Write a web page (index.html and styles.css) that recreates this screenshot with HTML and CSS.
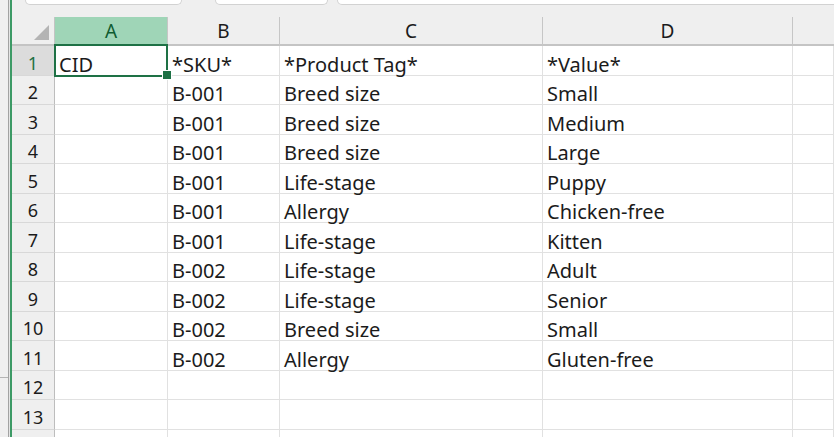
FILE: index.html
```html
<!DOCTYPE html>
<html>
<head>
<meta charset="utf-8">
<link rel="stylesheet" href="styles.css">
</head>
<body>
<div class="app">
  <div class="gutter"><div class="gutter-top"></div></div>
  <div class="edge"></div>
  <div class="green"></div>
  <div class="main">
    <div class="formula">
      <div class="fbox b1"></div>
      <div class="fbox b2"></div>
      <div class="fbox b3"></div>
    </div>
    <div class="sheet">
      <div class="corner"><svg width="15" height="15" viewBox="0 0 15 15"><path d="M15 0 L15 15 L0 15 Z" fill="#b4b4b4"/></svg></div>
      <div class="ch ch-sel">A</div><div class="ch">B</div><div class="ch">C</div><div class="ch">D</div><div class="ch last"></div>

      <div class="rh rh-sel">1</div><div class="c sel">CID</div><div class="c">*SKU*</div><div class="c">*Product Tag*</div><div class="c">*Value*</div><div class="c"></div>
      <div class="rh">2</div><div class="c"></div><div class="c">B-001</div><div class="c">Breed size</div><div class="c">Small</div><div class="c"></div>
      <div class="rh">3</div><div class="c"></div><div class="c">B-001</div><div class="c">Breed size</div><div class="c">Medium</div><div class="c"></div>
      <div class="rh">4</div><div class="c"></div><div class="c">B-001</div><div class="c">Breed size</div><div class="c">Large</div><div class="c"></div>
      <div class="rh">5</div><div class="c"></div><div class="c">B-001</div><div class="c">Life-stage</div><div class="c">Puppy</div><div class="c"></div>
      <div class="rh">6</div><div class="c"></div><div class="c">B-001</div><div class="c">Allergy</div><div class="c">Chicken-free</div><div class="c"></div>
      <div class="rh">7</div><div class="c"></div><div class="c">B-001</div><div class="c">Life-stage</div><div class="c">Kitten</div><div class="c"></div>
      <div class="rh">8</div><div class="c"></div><div class="c">B-002</div><div class="c">Life-stage</div><div class="c">Adult</div><div class="c"></div>
      <div class="rh">9</div><div class="c"></div><div class="c">B-002</div><div class="c">Life-stage</div><div class="c">Senior</div><div class="c"></div>
      <div class="rh">10</div><div class="c"></div><div class="c">B-002</div><div class="c">Breed size</div><div class="c">Small</div><div class="c"></div>
      <div class="rh">11</div><div class="c"></div><div class="c">B-002</div><div class="c">Allergy</div><div class="c">Gluten-free</div><div class="c"></div>
      <div class="rh">12</div><div class="c"></div><div class="c"></div><div class="c"></div><div class="c"></div><div class="c"></div>
      <div class="rh">13</div><div class="c"></div><div class="c"></div><div class="c"></div><div class="c"></div><div class="c"></div>
      <div class="rh"></div><div class="c"></div><div class="c"></div><div class="c"></div><div class="c"></div><div class="c"></div>
    </div>
  </div>
</div>
</body>
</html>
```
FILE: styles.css
```css
* { box-sizing: border-box; }
html, body { margin: 0; padding: 0; }
body {
  background: #efefef;
  font-family: "Noto Sans", "Open Sans", sans-serif;
  color: #1b1b1b;
}
.app {
  display: flex;
  width: 834px;
  height: 437px;
  overflow: hidden;
}
.gutter {
  width: 9px;
  flex: none;
  background: #efefef;
  border-right: 1px solid #a2a2a2;
}
.gutter-top {
  height: 378px;
  border-bottom: 1px solid #b4b4b4;
}
.edge { width: 1px; flex: none; background: #e4e4e4; }
.green { width: 2px; flex: none; background: #3d9a66; }
.main {
  flex: 1;
  min-width: 0;
  display: flex;
  flex-direction: column;
  background: #efefef;
}
.formula {
  height: 17px;
  flex: none;
  display: flex;
  align-items: flex-start;
  padding-left: 13px;
  margin-right: -12px;
}
.fbox {
  height: 5px;
  background: #fff;
  border: 1px solid #d2d2d2;
  border-top: none;
  border-radius: 0 0 7px 7px;
}
.b1 { width: 157px; }
.b2 { width: 113px; margin-left: 33px; }
.b3 { flex: 1; margin-left: 9px; }
.sheet {
  display: grid;
  grid-template-columns: 43px 113px 112px 263px 250px 1fr;
  grid-template-rows: 29px repeat(14, 29.5px);
  background: #fff;
}
.corner {
  background: #efefef;
  border-right: 1px solid #c4c4c4;
  border-bottom: 2px solid #c4c4c4;
  display: flex;
  align-items: flex-end;
  justify-content: flex-end;
  padding: 0 5px 4px 0;
}
.corner svg { display: block; }
.ch {
  background: #efefef;
  border-right: 1px solid #c6c6c6;
  border-bottom: 2px solid #c4c4c4;
  display: flex;
  align-items: flex-end;
  justify-content: center;
  font-size: 19px;
  line-height: 20px;
  padding-bottom: 3px;
  color: #1b1b1b;
}
.ch.last { border-right: none; }
.ch-sel {
  background: #9fd5b7;
  color: #0f5c31;
  border-bottom-color: #1e7145;
}
.rh {
  background: #efefef;
  border-right: 1px solid #bdbdbd;
  border-bottom: 1px solid #d8d8d8;
  display: flex;
  align-items: flex-end;
  justify-content: center;
  font-size: 18px;
  line-height: 20px;
  padding-bottom: 2px;
  color: #1b1b1b;
}
.rh-sel {
  background: #dcdcdc;
  color: #1e7145;
}
.c {
  border-right: 1px solid #e1e1e1;
  border-bottom: 1px solid #e1e1e1;
  display: flex;
  align-items: flex-end;
  padding: 0 4px 0 4px;
  font-size: 20px;
  line-height: 20px;
  white-space: nowrap;
  overflow: visible;
}
.sel {
  position: relative;
  z-index: 2;
}
.sel::after {
  content: "";
  position: absolute;
  left: -1px;
  top: -2px;
  right: -1px;
  bottom: -2px;
  border: 2px solid #1e7145;
}
.sel::before {
  content: "";
  position: absolute;
  right: -5px;
  bottom: -5px;
  width: 8px;
  height: 8px;
  background: #1e7145;
  border: 1px solid #fff;
  z-index: 3;
}
```
